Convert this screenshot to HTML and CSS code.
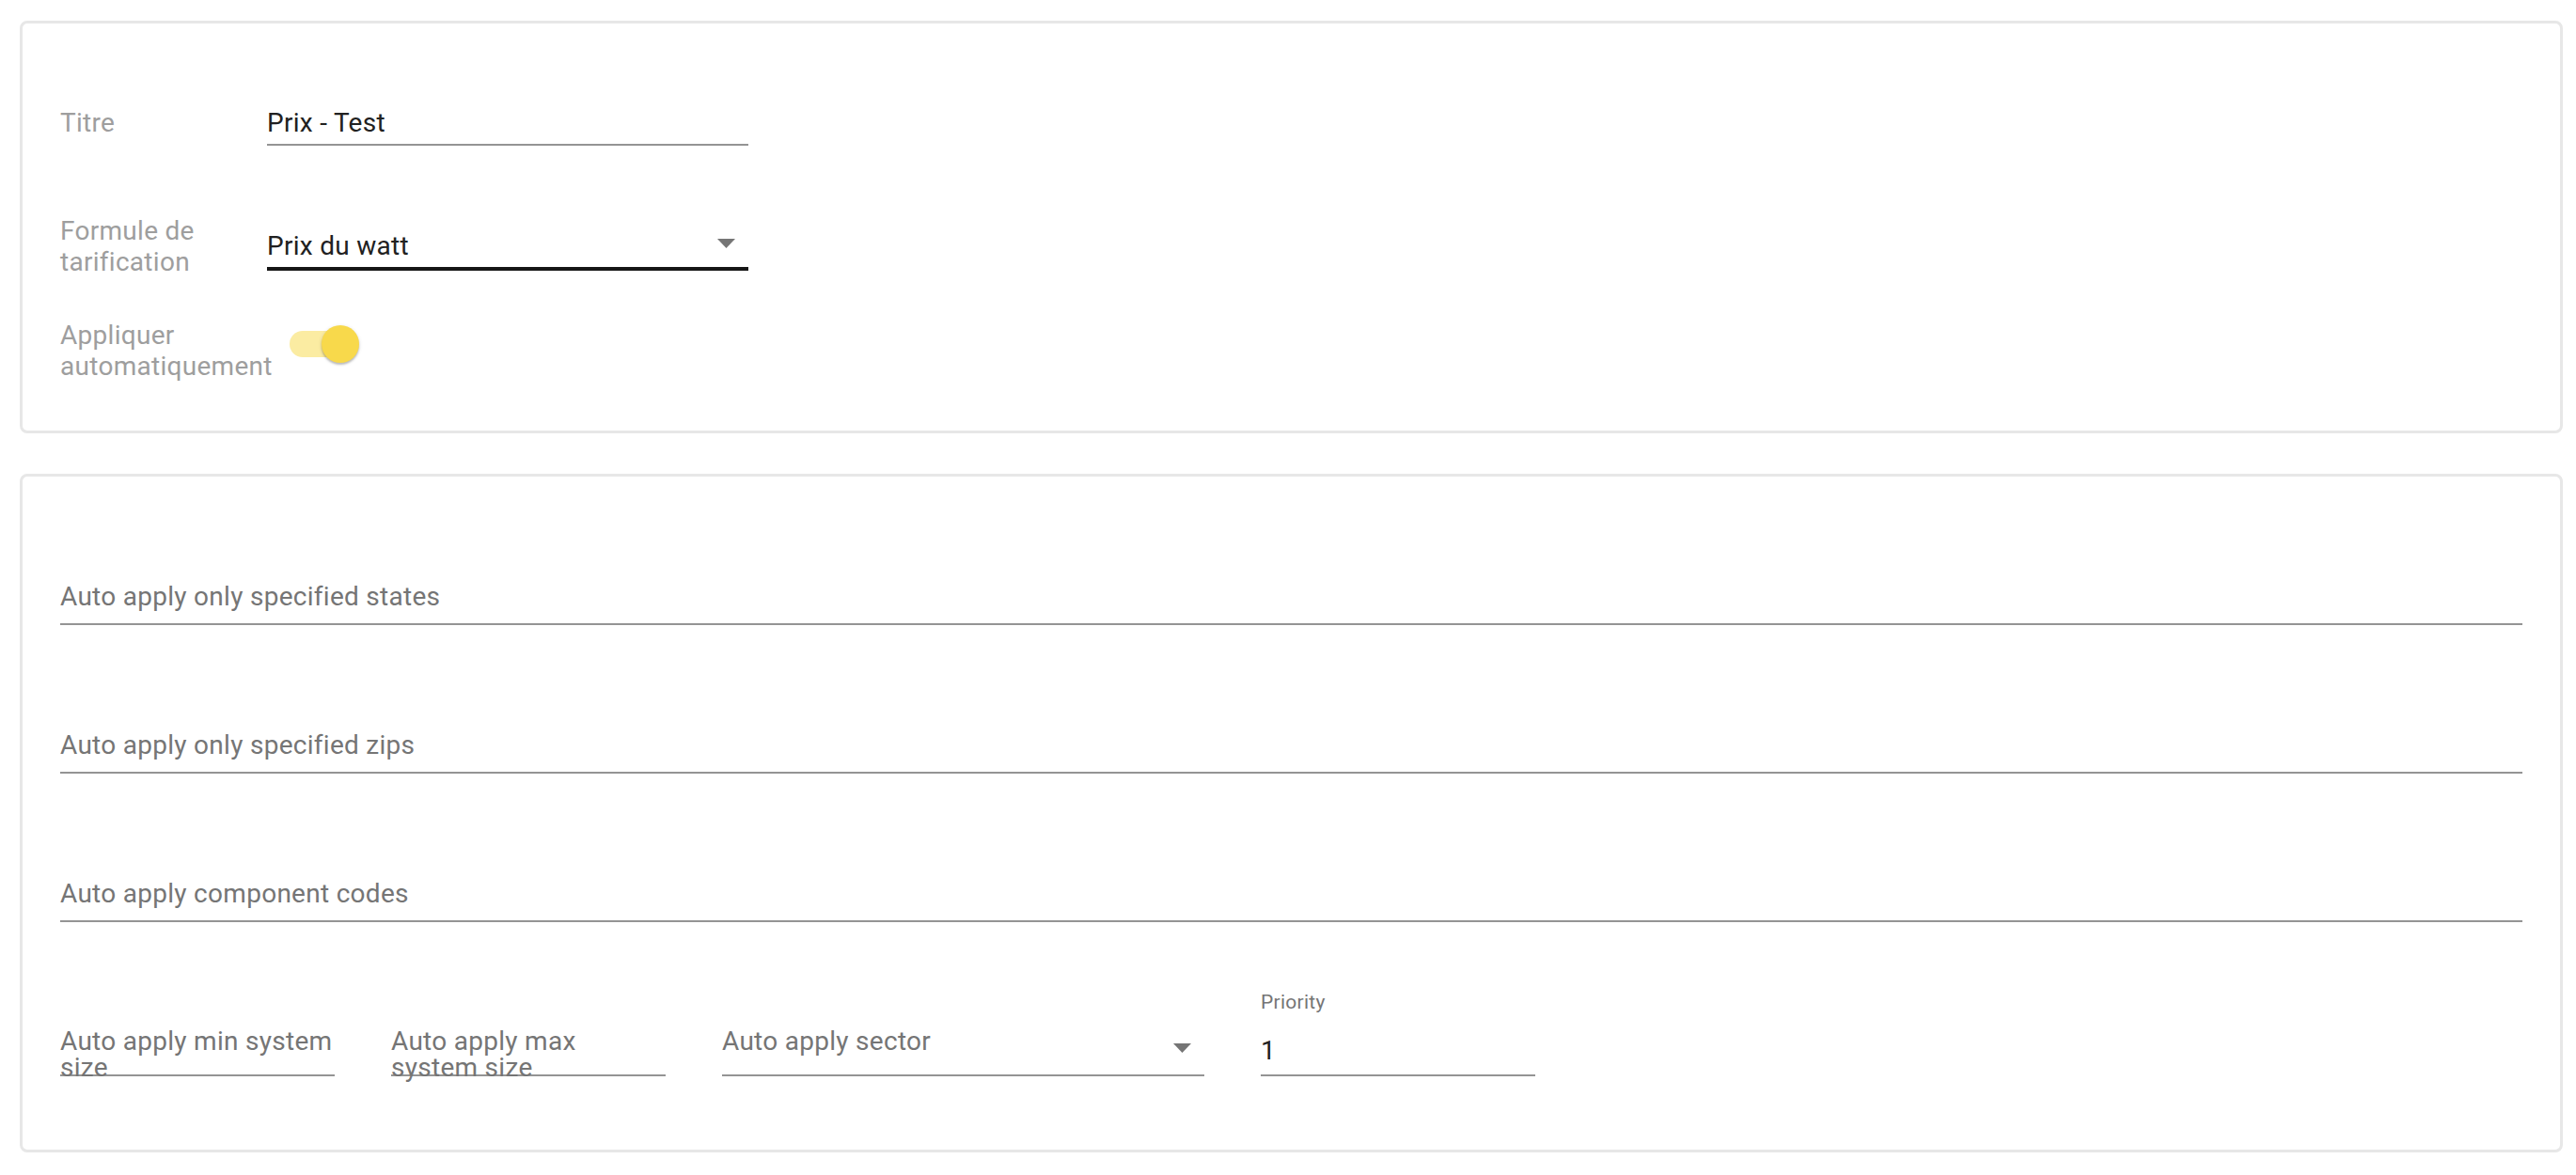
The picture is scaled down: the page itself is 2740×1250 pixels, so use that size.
FILE: index.html
```html
<!DOCTYPE html>
<html lang="fr">
<head>
<meta charset="utf-8">
<title>Prix - Test</title>
<link rel="stylesheet" href="styles.css">
</head>
<body>
<div class="page">
  <section class="card card-main">
    <div class="row row-title">
      <div class="row-label">Titre</div>
      <div class="field field-text">Prix - Test</div>
    </div>
    <div class="row row-formula">
      <div class="row-label">Formule de tarification</div>
      <div class="field field-select">
        <span>Prix du watt</span>
        <svg class="arrow" width="19" height="10" viewBox="0 0 19 10"><polygon points="0,0 19,0 9.5,10" fill="#757575"/></svg>
      </div>
    </div>
    <div class="row row-auto">
      <div class="row-label">Appliquer automatiquement</div>
      <div class="switch">
        <div class="track"></div>
        <div class="thumb"></div>
      </div>
    </div>
  </section>

  <section class="card card-auto">
    <div class="wide-field">Auto apply only specified states</div>
    <div class="wide-field">Auto apply only specified zips</div>
    <div class="wide-field">Auto apply component codes</div>
    <div class="bottom-row">
      <div class="small-field"><div class="ph">Auto apply min system size</div></div>
      <div class="small-field"><div class="ph">Auto apply max system size</div></div>
      <div class="small-field sector-field">
        <div class="ph">Auto apply sector</div>
        <svg class="arrow sector-arrow" width="19" height="10" viewBox="0 0 19 10"><polygon points="0,0 19,0 9.5,10" fill="#757575"/></svg>
      </div>
      <div class="priority-field">
        <div class="float-label">Priority</div>
        <div class="priority-value">1</div>
      </div>
    </div>
  </section>
</div>
</body>
</html>
```

FILE: styles.css
```css
* {
  box-sizing: border-box;
}

html, body {
  margin: 0;
  padding: 0;
  background: #ffffff;
}

body {
  font-family: Roboto, "Liberation Sans", Arial, sans-serif;
  font-size: 28px;
  line-height: 33px;
  letter-spacing: 0.28px;
  color: #212121;
}

.page {
  padding: 22px 14px 0 21px;
}

.card {
  border: 3px solid #e7e7e7;
  border-radius: 8px;
  background: #ffffff;
  padding-left: 40px;
  padding-right: 40px;
}

.card-main {
  padding-top: 89px;
  padding-bottom: 52px;
}

.row {
  display: flex;
  align-items: flex-start;
}

.row-label {
  width: 220px;
  flex-shrink: 0;
  color: #9e9e9e;
  font-size: 28px;
  line-height: 33px;
}

.field {
  width: 512px;
  flex-shrink: 0;
  line-height: 33px;
  color: #212121;
}

.field-text {
  padding-bottom: 6px;
  border-bottom: 2px solid #949494;
}

.row-formula {
  margin-top: 74px;
}

.field-select {
  margin-top: 16px;
  padding-bottom: 6px;
  border-bottom: 4px solid #161616;
  display: flex;
  justify-content: space-between;
  align-items: flex-start;
}

.arrow {
  display: block;
  flex-shrink: 0;
  margin-top: 9px;
  margin-right: 14px;
}

.row-auto {
  margin-top: 45px;
}

.switch {
  display: flex;
  align-items: center;
  margin-top: 6px;
  margin-left: 24px;
}

.track {
  width: 64px;
  height: 28px;
  border-radius: 14px;
  background: #fbeca2;
}

.thumb {
  width: 40px;
  height: 40px;
  border-radius: 50%;
  background: #f8d94b;
  margin-left: -30px;
  box-shadow: 0 2px 2px rgba(0, 0, 0, 0.2), 0 1px 4px rgba(0, 0, 0, 0.12);
}

.card-auto {
  margin-top: 43px;
  padding-top: 111px;
  padding-bottom: 78px;
}

.wide-field {
  color: #757575;
  line-height: 33px;
  padding-bottom: 12px;
  border-bottom: 2px solid #949494;
  margin-bottom: 111px;
}

.wide-field:nth-of-type(3) {
  margin-bottom: 73px;
}

.bottom-row {
  display: flex;
  align-items: flex-end;
  gap: 60px;
}

.small-field {
  width: 292px;
  height: 51px;
  flex-shrink: 0;
  border-bottom: 2px solid #949494;
  color: #757575;
  line-height: 28px;
}

.ph {
  line-height: 28px;
}

.sector-field {
  width: 513px;
  display: flex;
  justify-content: space-between;
  align-items: flex-start;
}

.sector-arrow {
  margin-top: 16px;
}

.priority-field {
  width: 292px;
  flex-shrink: 0;
  display: flex;
  flex-direction: column;
}

.float-label {
  font-size: 21px;
  line-height: 24px;
  color: #757575;
  margin-bottom: 23px;
}

.priority-value {
  line-height: 33px;
  color: #212121;
  padding-bottom: 9px;
  border-bottom: 2px solid #949494;
}
```
